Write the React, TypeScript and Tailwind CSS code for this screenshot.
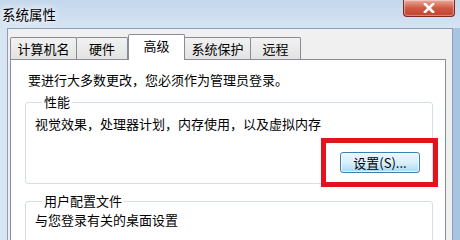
import React from 'react'

const tabs = [
  { name: '计算机名', w: 67 },
  { name: '硬件', w: 52 },
  { name: '高级', w: 57, active: true },
  { name: '系统保护', w: 67 },
  { name: '远程', w: 51 },
]

function GroupBox({ title, children, className = '' }: { title: string; children: React.ReactNode; className?: string }) {
  return (
    <fieldset className={`border border-[#d5dfe5] rounded-[3px] px-[9px] ${className}`}>
      <legend className="ml-[7px] px-[2px] leading-[16px]">{title}</legend>
      {children}
    </fieldset>
  )
}

export default function App() {
  return (
    <div
      className="w-[460px] h-[240px] overflow-hidden flex flex-col bg-gradient-to-r from-[#d8e5f3] via-[#c9dbef] to-[#a9c3e2] text-[13px] text-black"
      style={{ fontFamily: '"Noto Sans CJK SC", "Noto Sans", sans-serif' }}
    >
      {/* title bar */}
      <div className="relative h-[28px] shrink-0 bg-gradient-to-b from-[#c4d7ec] to-[#d6e4f3]">
        <span className="absolute left-[2px] top-[5px] text-[13.5px] leading-[18px] [text-shadow:0_0_6px_#ffffff,0_0_10px_#ffffff]">
          系统属性
        </span>
        <div className="absolute right-[5px] top-0 w-[52px] h-[17px] rounded-b-[4px] border border-t-0 border-[#7a2a20] bg-gradient-to-b from-[#e9a99b] via-[#d05a44] to-[#c0402b] flex items-center justify-center shadow-[inset_0_0_1px_1px_rgba(255,255,255,0.4)]">
          <svg width="12" height="10" viewBox="0 0 12 10">
            <path d="M2 1 L10 9 M10 1 L2 9" stroke="#ffffff" strokeWidth="2.6" strokeLinecap="square" />
          </svg>
        </div>
      </div>

      {/* dialog body */}
      <div className="flex-1 ml-[7px] mr-[7px] border border-b-0 border-[#8d9fb6] bg-[#f0f0f0] pl-[2px] pr-[6px] pt-[4px] flex flex-col">
        <div className="flex items-end h-[26px] relative z-10">
          {tabs.map((t) =>
            t.active ? (
              <div
                key={t.name}
                style={{ width: t.w }}
                className="h-[26px] -mb-px bg-white border border-b-0 border-[#898c95] rounded-t-[2px] flex items-start justify-center pt-[2px] leading-[18px]"
              >
                {t.name}
              </div>
            ) : (
              <div
                key={t.name}
                style={{ width: t.w }}
                className="h-[22px] -ml-px first:ml-0 border border-b-0 border-[#898c95] rounded-t-[2px] bg-gradient-to-b from-[#f2f2f2] to-[#e3e3e3] flex items-center justify-center leading-[18px]"
              >
                {t.name}
              </div>
            )
          )}
        </div>

        <div className="flex-1 bg-white border border-[#898c95] pl-[17px] pr-[12px] pt-[12px] relative">
          <p className="leading-[16px]">要进行大多数更改，您必须作为管理员登录。</p>

          <div className="-ml-[3px] mt-[6px] relative">
            <GroupBox title="性能" className="pb-[10px]">
              <p className="leading-[16px] mt-[6px]">视觉效果，处理器计划，内存使用，以及虚拟内存</p>
              <div className="flex justify-end pt-[20px] mr-[3px]">
                <button
                  type="button"
                  className="w-[80px] h-[21px] rounded-[3px] border border-[#3c7fb1] bg-gradient-to-b from-[#eaf6fd] via-[#d9f0fc] to-[#a7d9f5] text-[13px] leading-[18px] shadow-[inset_0_0_0_1px_#ffffffaa]"
                >
                  设置(S)...
                </button>
              </div>
            </GroupBox>
            {/* red highlight frame */}
            <div className="absolute left-[296px] top-[44px] w-[117px] h-[49px] border-[5px] border-[#e3121b]" />

            <GroupBox title="用户配置文件" className="mt-[9px] pb-[20px]">
              <p className="leading-[16px] mt-[3px]">与您登录有关的桌面设置</p>
            </GroupBox>
          </div>
        </div>
      </div>
    </div>
  )
}
